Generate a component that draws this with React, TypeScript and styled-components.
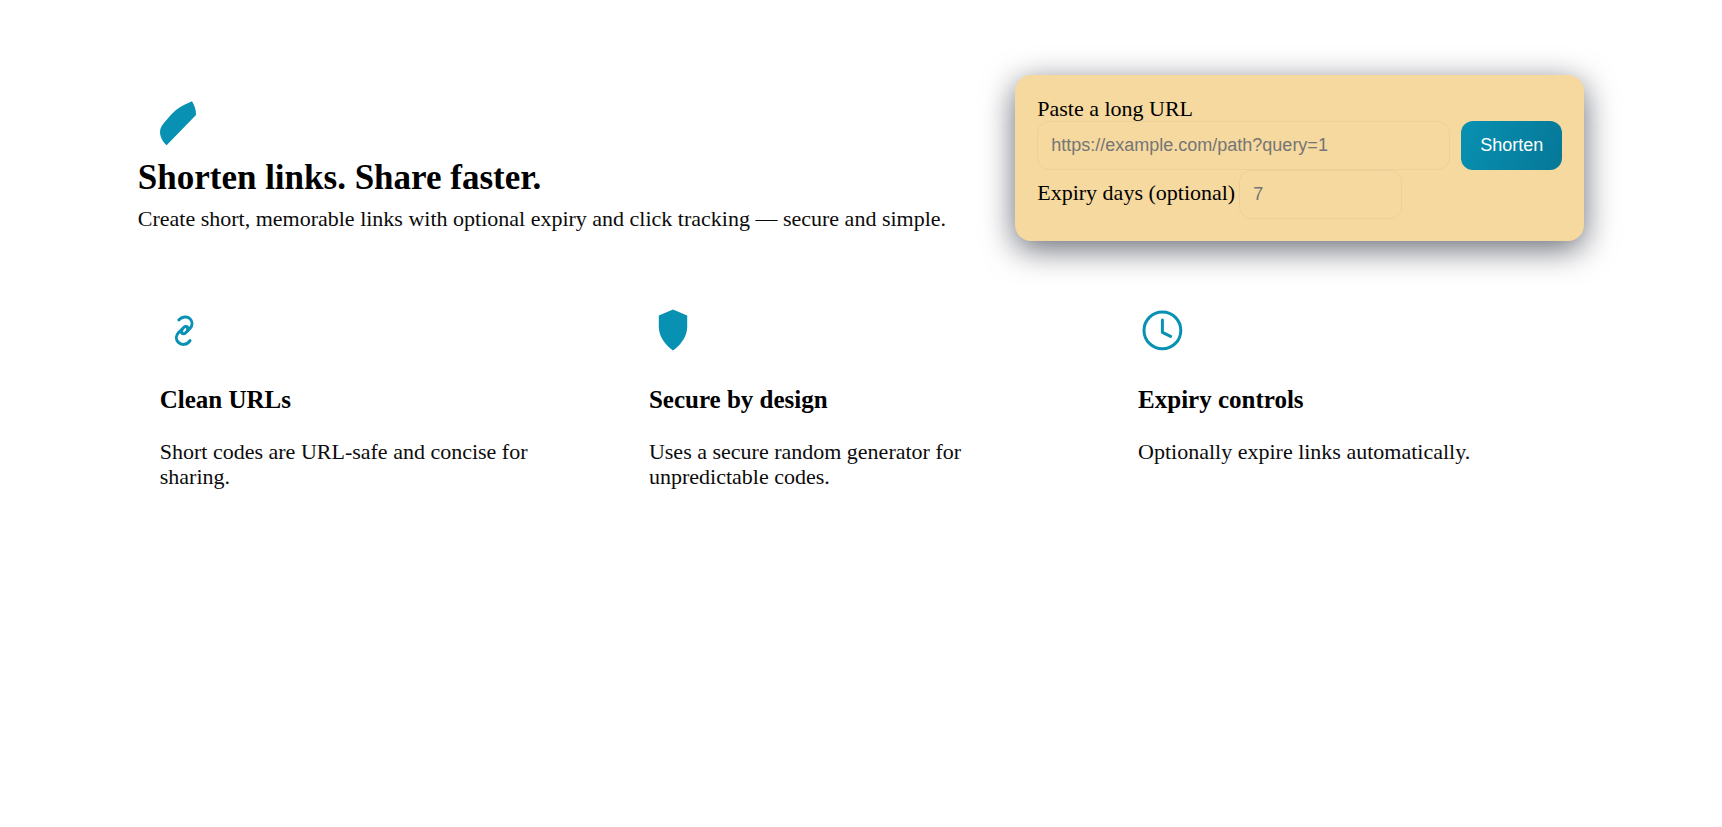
import React from "react";
import styled, { createGlobalStyle } from "styled-components";

const GlobalStyle = createGlobalStyle`
  *, *::before, *::after { box-sizing: border-box; }
  body {
    margin: 0;
    background: #fff;
    color: #000;
    font-family: "Liberation Serif", "Times New Roman", serif;
    font-size: 22px;
    line-height: 24px;
  }
`;

const Page = styled.main`
  width: 84%;
  margin: 0 auto;
  padding: 75px 0 48px;
`;

const Hero = styled.section`
  display: flex;
  align-items: center;
  justify-content: space-between;
  gap: 48px;
`;

const Intro = styled.div`
  flex: 1;
  padding-top: 14px;
`;

const Logo = styled.svg`
  display: block;
  width: 48px;
  height: 48px;
  margin-left: 22px;
  color: #0891b2;
`;

const Title = styled.h1`
  margin: 10px 0 8px;
  font-size: 35px;
  line-height: 40px;
`;

const Text = styled.p`
  margin: 0;
  color: #0b0b0b;
  line-height: 25px;
`;

const ShortenCard = styled.form`
  display: flex;
  flex-direction: column;
  width: 569px;
  padding: 22px;
  border-radius: 16px;
  background: #f6d99f;
  box-shadow: 0 8px 32px rgba(2, 6, 23, 0.6);
`;

const FieldRow = styled.div`
  display: flex;
  gap: 11px;
`;

const ExpiryRow = styled.div`
  display: flex;
  align-items: baseline;
  gap: 4px;
`;

const Field = styled.input<{ $short?: boolean }>`
  ${({ $short }) => ($short ? "width: 163px;" : "flex: 1; min-width: 0;")}
  height: 49px;
  padding: 0 13px;
  border: 1px solid rgba(2, 6, 23, 0.04);
  border-radius: 12px;
  background: transparent;
  font-family: "Liberation Sans", Arial, sans-serif;
  font-size: 18px;
  &::placeholder { color: #757575; }
`;

const SubmitButton = styled.button`
  height: 49px;
  padding: 0 19px;
  border: 0;
  border-radius: 12px;
  background: linear-gradient(110deg, #0891b2, #067797);
  color: #fff;
  font-family: "Liberation Sans", Arial, sans-serif;
  font-size: 18px;
  cursor: pointer;
`;

const Features = styled.section`
  display: grid;
  grid-template-columns: repeat(3, 1fr);
  gap: 21px;
  margin-top: 43px;
`;

const Feature = styled.article`
  padding: 22px;
`;

const FeatureIcon = styled.svg`
  display: block;
  width: 48px;
  height: 48px;
  color: #0891b2;
`;

const FeatureTitle = styled.h2`
  margin: 32px 0 25px;
  font-size: 25px;
  line-height: 28px;
`;

const features = [
  {
    title: "Clean URLs",
    text: "Short codes are URL-safe and concise for sharing.",
    icon: (
      <g fill="none" stroke="currentColor" strokeWidth="1.5" strokeLinecap="round" strokeLinejoin="round">
        <path d="M9.4 7C11 5.2 13.6 5 15 6.4C16.4 7.8 16.3 9.8 15 11.2L12.7 13.5C12.2 14 11.5 14 11 13.5" />
        <path d="M15 17.3C13.6 19.5 10.8 19.8 9.2 18.2C7.8 16.8 7.9 14.8 9.2 13.4L12 10.6C12.5 10.1 13.2 10.1 13.7 10.6" />
        <path d="M11 13.5C10.7 13.1 10.7 12.5 11 12M13.7 10.6C14 11 14 11.6 13.7 12.3" />
      </g>
    ),
  },
  {
    title: "Secure by design",
    text: "Uses a secure random generator for unpredictable codes.",
    icon: (
      <path
        fill="currentColor"
        d="M12 1.8L19.1 4.8V10.5C19.1 15 16 19.5 12 22.3C8 19.5 4.9 15 4.9 10.5V4.8Z"
      />
    ),
  },
  {
    title: "Expiry controls",
    text: "Optionally expire links automatically.",
    icon: (
      <g fill="none" stroke="currentColor" strokeWidth="1.5" strokeLinecap="round" strokeLinejoin="round">
        <circle cx="12.2" cy="12.2" r="9.2" />
        <path d="M12.2 7V13.2L16.3 15.2" />
      </g>
    ),
  },
];

export default function App() {
  return (
    <>
      <GlobalStyle />
      <Page>
        <Hero>
          <Intro>
            <Logo viewBox="0 0 48 48" aria-hidden="true">
              <path
                fill="currentColor"
                d="M32 1.3C34.5 5.5 36.2 10 36 15L6.6 45.3C3 42 0 37 0 32C0 28 2 25.5 4.5 22.3C8 18 11.5 14 16 10C20.5 6.5 26 3.8 32 1.3Z"
              />
            </Logo>
            <Title>Shorten links. Share faster.</Title>
            <Text>
              Create short, memorable links with optional expiry and click tracking — secure and simple.
            </Text>
          </Intro>
          <ShortenCard onSubmit={(e) => e.preventDefault()}>
            <label htmlFor="long-url">Paste a long URL</label>
            <FieldRow>
              <Field id="long-url" type="url" placeholder="https://example.com/path?query=1" />
              <SubmitButton type="submit">Shorten</SubmitButton>
            </FieldRow>
            <ExpiryRow>
              <label htmlFor="expiry-days">Expiry days (optional)</label>
              <Field $short id="expiry-days" type="number" min="1" placeholder="7" />
            </ExpiryRow>
          </ShortenCard>
        </Hero>
        <Features>
          {features.map((feature) => (
            <Feature key={feature.title}>
              <FeatureIcon viewBox="0 0 24 24" aria-hidden="true">
                {feature.icon}
              </FeatureIcon>
              <FeatureTitle>{feature.title}</FeatureTitle>
              <Text>{feature.text}</Text>
            </Feature>
          ))}
        </Features>
      </Page>
    </>
  );
}
